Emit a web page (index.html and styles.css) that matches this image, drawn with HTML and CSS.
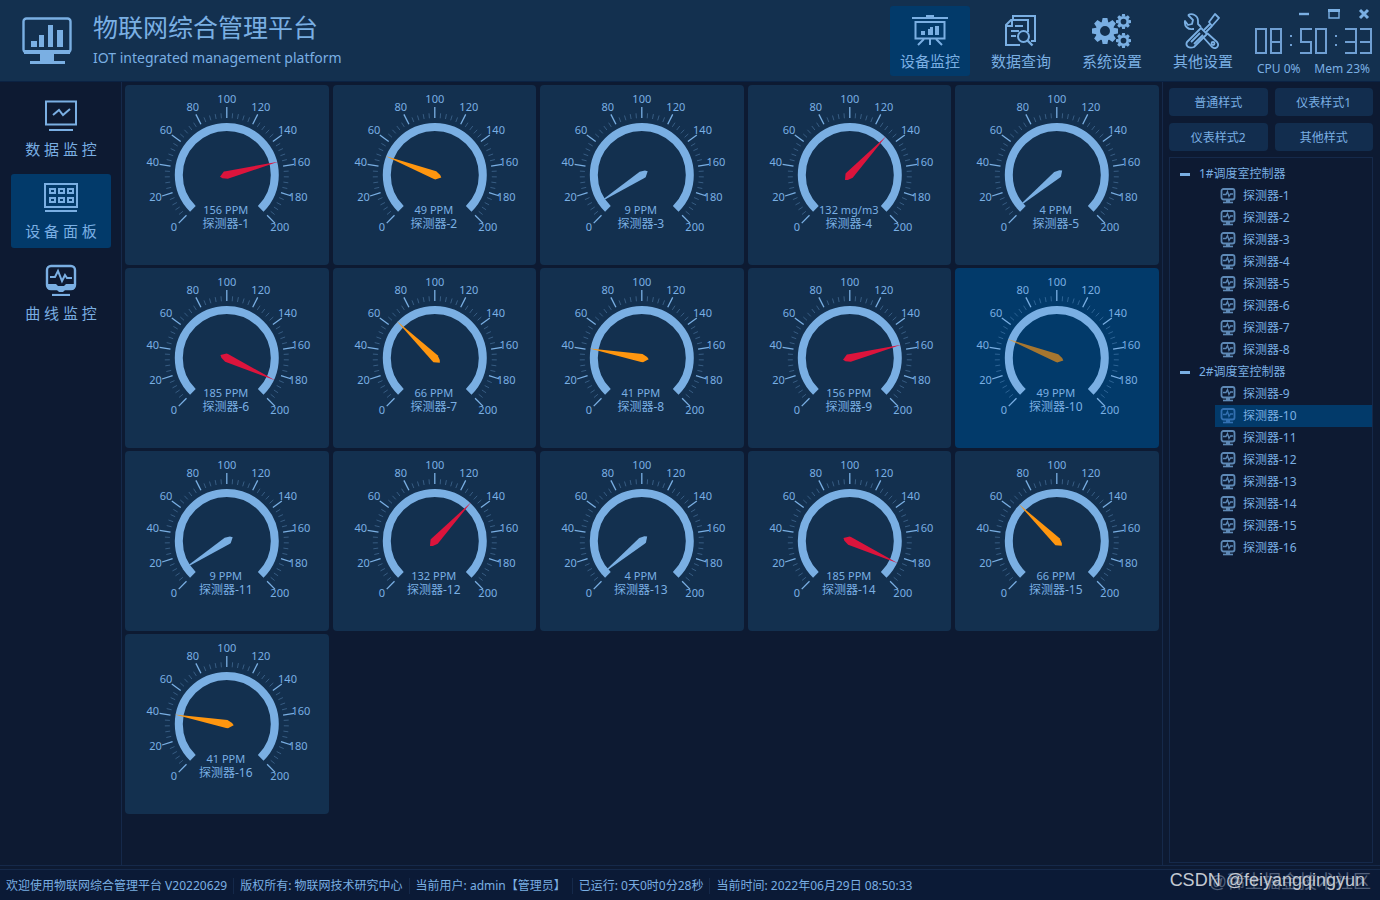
FILE: index.html
```html
<!DOCTYPE html>
<html lang="zh-CN">
<head>
    <meta charset="utf-8"/>
    <title>物联网综合管理平台</title>
    <meta name="viewport" content="width=device-width, initial-scale=1.0"/>
    <link rel="stylesheet" href="styles.css">
</head>
<body>
<!--公用图标-->
<svg class="defs" width="0" height="0" aria-hidden="true">
    <symbol id="ico-wave" viewBox="0 0 32 32">
        <rect x="2" y="2" width="28" height="23" rx="4" fill="none" stroke="currentColor" stroke-width="2.4"/>
        <path d="M5 13h5l3-6 4 10 3-6 2 3h5" fill="none" stroke="currentColor" stroke-width="2"/>
        <path d="M2 20h9l2 2h6l2-2h9v2q0 4-4 4h-6l-2 2h-4l-2-2H6q-4 0-4-4z" fill="currentColor"/>
        <path d="M7 31h18" stroke="currentColor" stroke-width="2.2"/>
    </symbol>
    <symbol id="ico-probe" viewBox="0 0 16 16">
        <rect x="1.500" y="1" width="13" height="10.500" rx="2" fill="none" stroke="currentColor" stroke-width="1.800"/>
        <path d="M3 6.500h3l1.500-3 1.500 5 1.500-2.500H13" fill="none" stroke="currentColor" stroke-width="1.300"/>
        <path d="M6 11h4v3H6z" fill="currentColor"/>
        <path d="M3 14.500h10" stroke="currentColor" stroke-width="1.600"/>
    </symbol>
    <symbol id="ico-gear" viewBox="-12 -12 24 24">
        <circle r="6.700" fill="none" stroke="currentColor" stroke-width="4.200"/>
        <path d="M-2.200 -12h4.400l.8 4h-6zM-2.200 12h4.400l.8-4h-6zM12 -2.200v4.400l-4 .8v-6zM-12 -2.200v4.400l4 .8v-6z" fill="currentColor"/>
        <path transform="rotate(45)" d="M-2.200 -12h4.400l.8 4h-6zM-2.200 12h4.400l.8-4h-6zM12 -2.200v4.400l-4 .8v-6zM-12 -2.200v4.400l4 .8v-6z" fill="currentColor"/>
    </symbol>
</svg>

<header class="top">
    <svg class="logo" viewBox="0 0 50 48" aria-hidden="true">
        <rect x="1.500" y="1.500" width="47" height="34" rx="3" fill="none" stroke="currentColor" stroke-width="2.400"/>
        <path d="M2 33h46v4H2z" fill="currentColor"/>
        <path d="M9 24h6v6H9zM17 18h5v12h-5zM26 8h5v22h-5zM35 13h6v17h-6z" fill="currentColor"/>
        <path d="M18 37h14v7h11v3H8v-3h10z" fill="currentColor"/>
    </svg>
    <div class="brand">
        <h1>物联网综合管理平台</h1>
        <p>IOT integrated management platform</p>
    </div>
    <nav class="menu">
        <button type="button" class="on">
            <svg viewBox="0 0 36 32" aria-hidden="true">
                <path d="M0 3h36" fill="none" stroke="currentColor" stroke-width="2.200"/>
                <path d="M14 0h8v3h-8z" fill="currentColor"/>
                <rect x="3.500" y="7" width="29" height="16.500" fill="none" stroke="currentColor" stroke-width="2"/>
                <path d="M9 16h4v4H9zM16 14h3v6h-3zM18 12h3v8h-3zM23 11h4v9h-4z" fill="currentColor"/>
                <path d="M12 24l-6 6M18 24v6M24 24l6 6" stroke="currentColor" stroke-width="2"/>
            </svg>
            <span>设备监控</span>
        </button>
        <button type="button">
            <svg viewBox="0 0 36 32" aria-hidden="true">
                <path d="M10 4V1h22v25h-4" fill="none" stroke="currentColor" stroke-width="2"/>
                <path d="M17 30H3V10l5-5h17v12M9 5v6H3" fill="none" stroke="currentColor" stroke-width="2"/>
                <path d="M12 11h8M8 16h8M8 21h5" stroke="currentColor" stroke-width="2"/>
                <circle cx="20.500" cy="21.500" r="5.500" fill="none" stroke="currentColor" stroke-width="2"/>
                <path d="M24.500 25.500l5 5" stroke="currentColor" stroke-width="2.400"/>
            </svg>
            <span>数据查询</span>
        </button>
        <button type="button">
            <svg class="wide" viewBox="0 0 40 36" aria-hidden="true">
                <use href="#ico-gear" x="0" y="5" width="26" height="26"/>
                <use href="#ico-gear" x="24" y="1" width="15" height="15"/>
                <use href="#ico-gear" x="24" y="20" width="15" height="15"/>
            </svg>
            <span>系统设置</span>
        </button>
        <button type="button">
            <svg class="wide" viewBox="0 0 40 36" aria-hidden="true" fill="none" stroke="currentColor" stroke-width="1.800" stroke-linejoin="round">
                <path d="M5 2l5 5-1 4-4 1-3-4c-1 5 3 9 8 8l1 0M5 2c4-2 10 0 10 6v3l3 3M24 20l10 9c3 4-1 8-5 5l-9-10"/>
                <circle cx="30" cy="30.500" r="1.500"/>
                <path d="M4 29l14-14 6 6-13 13c-5 2-9-1-7-5zM8 29l9-9M11 31l9-9"/>
                <path d="M21 17l6-6M23 19l6-6"/>
                <path d="M26 9l6-8 4 4-7 8z"/>
            </svg>
            <span>其他设置</span>
        </button>
    </nav>
    <div class="sys">
        <div class="win">
            <button type="button" aria-label="最小化"><svg viewBox="0 0 12 12"><path d="M1 6h10" stroke="currentColor" stroke-width="2.400"/></svg></button>
            <button type="button" aria-label="最大化"><svg viewBox="0 0 12 12"><path d="M1 2v8h10V2z" fill="none" stroke="currentColor" stroke-width="1.400"/><path d="M0 1h12v3H0z" fill="currentColor"/></svg></button>
            <button type="button" aria-label="关闭"><svg viewBox="0 0 12 12"><path d="M2 2l8 8M10 2l-8 8" stroke="currentColor" stroke-width="3"/></svg></button>
        </div>
        <time class="lcd" id="lcd" datetime="08:50:33"></time>
        <div class="usage"><span>CPU 0%</span><span>Mem 23%</span></div>
    </div>
</header>

<div class="content">
    <nav class="side">
        <button type="button">
            <svg viewBox="0 0 34 32" aria-hidden="true" fill="none" stroke="currentColor" stroke-width="2">
                <rect x="2" y="1.500" width="30" height="23"/>
                <path d="M9 15l6-5 4 5 7-6M5 30h24"/>
            </svg>
            <span>数 据 监 控</span>
        </button>
        <button type="button" class="on">
            <svg viewBox="0 0 34 32" aria-hidden="true" fill="none" stroke="currentColor" stroke-width="2">
                <rect x="1" y="2" width="32" height="23"/>
                <path d="M1 29h32"/>
                <path d="M6 7h5v4H6zM15 7h5v4h-5zM24 7h5v4h-5zM6 16h5v4H6zM15 16h5v4h-5zM24 16h5v4h-5z"/>
            </svg>
            <span>设 备 面 板</span>
        </button>
        <button type="button">
            <svg aria-hidden="true"><use href="#ico-wave"/></svg>
            <span>曲 线 监 控</span>
        </button>
    </nav>

    <main class="panels" id="panels"></main>

    <aside class="right">
        <div class="styles">
            <button type="button">普通样式</button>
            <button type="button">仪表样式1</button>
            <button type="button">仪表样式2</button>
            <button type="button">其他样式</button>
        </div>
        <div class="tree">
            <details open>
                <summary>1#调度室控制器</summary>
                <ul id="tree1"></ul>
            </details>
            <details open>
                <summary>2#调度室控制器</summary>
                <ul id="tree2"></ul>
            </details>
        </div>
    </aside>
</div>

<footer class="status">
    <span>欢迎使用物联网综合管理平台 V20220629</span>
    <span>版权所有: 物联网技术研究中心</span>
    <span>当前用户: admin【管理员】</span>
    <span>已运行: 0天0时0分28秒</span>
    <span>当前时间: 2022年06月29日 08:50:33</span>
</footer>
<div class="mark mark-back">@稀土掘金技术社区</div>
<div class="mark">CSDN @feiyangqingyun</div>
<script src="main.js"></script>
</body>
</html>
```
FILE: styles.css
```css
* {
    padding: 0;
    margin: 0;
    box-sizing: border-box;
    list-style: none;
}
:root {
    --text: #7aafe3;
    --bg: #0d1a32;
    --card: #13304f;
    --on: #023a6a;
    --line: #15294a;
}
body {
    min-height: 100vh;
    display: grid;
    grid-template-rows: auto 1fr auto;
    background: var(--bg);
    color: var(--text);
    font: 12px/16px "Noto Sans", "Noto Sans CJK SC", sans-serif;
}
button {
    border: none;
    background: none;
    color: inherit;
    font: inherit;
    cursor: pointer;
}
svg {display: block;}
.defs {position: absolute;}

/* 顶部 */
.top {
    display: flex;
    align-items: center;
    height: 82px;
    padding: 0 8px 0 22px;
    background: var(--card);
    border-bottom: 1px solid #0b2243;
}
.logo {width: 50px;height: 48px;}
.brand {flex: 1;padding-left: 21px;}
.brand h1 {font-size: 25px;font-weight: 400;line-height: 34px;}
.brand p {font-size: 14px;line-height: 28px;}
.menu {display: flex;gap: 11px;}
.menu button {
    width: 80px;
    height: 70px;
    padding-top: 4px;
    display: flex;
    flex-direction: column;
    align-items: center;
    justify-content: center;
    gap: 4px;
    border-radius: 3px;
    font-size: 15px;
    line-height: 20px;
}
.menu svg {width: 36px;height: 32px;}
.menu svg.wide {width: 40px;height: 36px;margin: -2px 0;}
.menu .on, .side .on {background: var(--on);}
.sys {
    width: 117px;
    margin-left: 12px;
    padding-top: 2px;
    display: flex;
    flex-direction: column;
    gap: 8px;
}
.win {display: flex;justify-content: flex-end;gap: 18px;padding-right: 2px;}
.win svg {width: 12px;height: 12px;}
.lcd {display: flex;gap: 3px;}
.lcd .num {width: 12px;height: 26px;display: grid;grid-template-rows: 1fr 1fr;}
.lcd i {border: 0 solid #6f9fd3;}
.lcd .t {border-top-width: 2px;}
.lcd .b {border-bottom-width: 2px;}
.lcd .l {border-left-width: 2px;}
.lcd .r {border-right-width: 2px;}
.lcd .dot {width: 12px;display: flex;flex-direction: column;align-items: center;justify-content: center;gap: 7px;}
.lcd .dot i {border-width: 1px;}
.usage {display: flex;justify-content: space-between;padding: 0 2px;line-height: 14px;}

/* 中间 */
.content {display: flex;border-bottom: 1px solid var(--line);margin-bottom: 3px;}
.side {
    width: 122px;
    padding: 10px 10px 10px 11px;
    display: flex;
    flex-direction: column;
    gap: 8px;
    border-right: 1px solid var(--line);
}
.side button {
    height: 74px;
    padding-top: 2px;
    display: flex;
    flex-direction: column;
    align-items: center;
    justify-content: center;
    gap: 6px;
    border-radius: 3px;
    font-size: 15px;
    line-height: 22px;
}
.side svg {width: 34px;height: 32px;}
.panels {
    flex: 1;
    padding: 3px;
    display: grid;
    grid-template-columns: repeat(5, 1fr);
    grid-auto-rows: 180px;
    align-content: start;
    gap: 3px 4px;
}
.card {background: var(--card);border-radius: 4px;}
.card.on {background: var(--on);}
.card svg {width: 100%;height: 100%;}
.card text {fill: var(--text);font-size: 11px;text-anchor: middle;}
.card .name {font-size: 12px;}
.ring {fill: none;stroke: var(--text);stroke-width: 8;}
.tick {stroke: var(--text);stroke-width: 1;opacity: .35;}
.tick.big {opacity: 1;stroke-width: 1.3;}
.needle {fill: var(--text);}
.needle.warn {fill: #ff960f;}
.needle.alarm {fill: #dc143c;}
.card.on .needle {opacity: .65;}

/* 右侧 */
.right {
    width: 218px;
    padding: 6px 7px 2px 6px;
    border-left: 1px solid var(--line);
    display: flex;
    flex-direction: column;
    gap: 6px;
}
.styles {display: grid;grid-template-columns: 1fr 1fr;gap: 7px;}
.styles button {height: 28px;padding-top: 2px;background: #122d4e;border-radius: 4px;}
.tree {flex: 1;border: 1px solid var(--line);padding: 5px 0;}
.tree summary {
    display: flex;
    align-items: center;
    gap: 9px;
    height: 22px;
    padding-left: 10px;
    cursor: pointer;
}
.tree summary::before {content: "";width: 10px;height: 3px;background: var(--text);}
.tree li {padding-left: 45px;}
.tree li button {
    display: flex;
    align-items: center;
    gap: 7px;
    width: 100%;
    height: 22px;
    padding-left: 5px;
}
.tree li svg {width: 16px;height: 16px;opacity: .75;}
.tree .on {background: var(--on);}
.tree .on svg {color: #4383c9;}

/* 底部 */
.status {
    display: flex;
    align-items: center;
    height: 31px;
    padding: 2px 0 0 6px;
    background: #0b1a36;
    border-top: 1px solid var(--line);
}
.status span + span {margin-left: 6px;padding-left: 6px;border-left: 1px solid var(--line);}

/* 水印 */
.mark {
    position: absolute;
    right: 15px;
    bottom: 8px;
    color: #c3c9d2;
    font: 18px/24px "Liberation Sans", "Noto Sans CJK SC", sans-serif;
}
.mark-back {right: 9px;bottom: 6px;color: #52607a;}
```
FILE: main.js
```javascript
var values = [156, 49, 9, 132, 4, 185, 66, 41, 156, 49, 9, 132, 4, 185, 66, 41];
var current = 10;

// 角度转坐标,0度朝上
function pos(r, deg) {
    var a = deg * Math.PI / 180;
    return [(r * Math.sin(a)).toFixed(1), (-r * Math.cos(a)).toFixed(1)];
}

// 刻度盘 0-200 共270度
function dial() {
    var p1 = pos(48, -135), p2 = pos(48, 135);
    var s = '<path class="ring" d="M' + p1 + 'A48 48 0 1 1 ' + p2 + '"/>';
    for (var i = 0; i <= 50; i++) {
        var deg = -135 + i * 5.4;
        var big = i % 5 == 0;
        var a = pos(57, deg), b = pos(big ? 68 : 62, deg);
        s += '<line class="tick' + (big ? ' big' : '') + '" x1="' + a[0] + '" y1="' + a[1] + '" x2="' + b[0] + '" y2="' + b[1] + '"/>';
        if (big) {
            var t = pos(75, deg);
            s += '<text x="' + t[0] + '" y="' + t[1] + '" dy="3">' + i * 4 + '</text>';
        }
    }
    return s;
}

function fnPanels() {
    var base = dial(), html = "";
    for (var i = 0; i < values.length; i++) {
        var v = values[i];
        var state = v > 100 ? " alarm" : v > 40 ? " warn" : "";
        var unit = i == 3 ? " mg/m3" : " PPM";
        html += '<section class="card' + (i + 1 == current ? " on" : "") + '"><svg viewBox="-90 -90 180 180">' + base +
            '<polygon class="needle' + state + '" points="0,-53 4,0 2,5 0,7 -4,2 -4,0" transform="rotate(' + (-135 + v * 1.35) + ')"/>' +
            '<text x="-1" y="39">' + v + unit + '</text>' +
            '<text class="name" x="-1" y="53">探测器-' + (i + 1) + '</text></svg></section>';
    }
    document.getElementById("panels").innerHTML = html;
}

function fnTree(id, from, to) {
    var html = "";
    for (var i = from; i <= to; i++) {
        html += '<li><button type="button"' + (i == current ? ' class="on"' : '') + '><svg aria-hidden="true"><use href="#ico-probe"/></svg>探测器-' + i + '</button></li>';
    }
    document.getElementById(id).innerHTML = html;
}

// 数码管,上下两格各自的边
var seg = {
    "0": ["t l r", "l r b"],
    "3": ["t r", "t r b"],
    "5": ["t l", "t r b"],
    "8": ["t l r", "t l r b"]
};
function fnLcd() {
    var lcd = document.getElementById("lcd"), html = "";
    var str = lcd.getAttribute("datetime");
    for (var i = 0; i < str.length; i++) {
        var s = seg[str[i]];
        html += s ? '<span class="num"><i class="' + s[0] + '"></i><i class="' + s[1] + '"></i></span>'
            : '<span class="dot"><i></i><i></i></span>';
    }
    lcd.innerHTML = html;
}

fnPanels();
fnTree("tree1", 1, 8);
fnTree("tree2", 9, 16);
fnLcd();
```
